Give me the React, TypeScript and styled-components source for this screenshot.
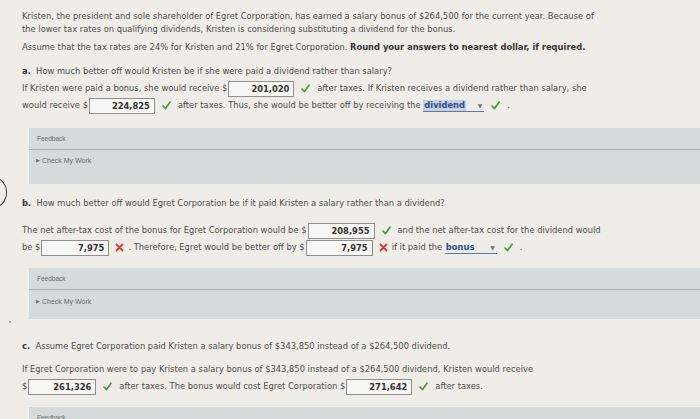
import React from "react";
import styled, { createGlobalStyle } from "styled-components";

const Global = createGlobalStyle`
  html, body { margin: 0; padding: 0; background: #eeede8; }
  body { font-family: "DejaVu Sans", Verdana, sans-serif; }
`;

const Page = styled.div`
  position: relative;
  width: 700px;
  height: 419px;
  overflow: hidden;
  box-sizing: border-box;
  padding: 10px 0 0 22px;
  color: #4f4f4c;
  font-size: 8.35px;
  background: #eeede8;
`;

const Para = styled.p<{ $mt: number }>`
  margin: ${(p) => p.$mt}px 0 0;
  line-height: 13px;
  white-space: nowrap;
`;

const Strong = styled.b`
  color: #363634;
`;

const Row = styled.div<{ $mt?: number }>`
  margin-top: ${(p) => p.$mt ?? 0}px;
  height: 17px;
  line-height: 17px;
  white-space: nowrap;
`;

const Box = styled.span<{ $w: number }>`
  display: inline-block;
  width: ${(p) => p.$w}px;
  height: 16px;
  box-sizing: border-box;
  margin-left: 1px;
  padding-right: 4px;
  border: 1px solid #8f8f8b;
  background: #f7f7f4;
  color: #333331;
  font-weight: bold;
  text-align: right;
  line-height: 14px;
  vertical-align: middle;
`;

const Mark = styled.svg<{ $ml: number; $mr: number }>`
  display: inline-block;
  width: 9px;
  height: 9px;
  margin: 0 ${(p) => p.$mr}px 0 ${(p) => p.$ml}px;
  vertical-align: middle;
`;

const Select = styled.span<{ $w: number }>`
  display: inline-flex;
  align-items: center;
  justify-content: space-between;
  width: ${(p) => p.$w}px;
  height: 11px;
  border-bottom: 1px solid #5a78ae;
  vertical-align: middle;
  line-height: 11px;
`;

const SelectText = styled.span<{ $hl?: boolean }>`
  color: #2f4e8c;
  font-weight: bold;
  background: ${(p) => (p.$hl ? "#c6d1e2" : "transparent")};
  padding: 0 1px;
`;

const Arrow = styled.span`
  color: #777;
  font-size: 6px;
  padding-right: 2px;
`;

const Panel = styled.div<{ $mt: number }>`
  margin: ${(p) => p.$mt}px 0 0 7px;
  background: #d4dbda;
  font-family: "Liberation Sans", Arial, sans-serif;
  color: #676b6a;
`;

const PanelHead = styled.div`
  height: 21px;
  border-bottom: 1px solid #a8b1b0;
  padding-left: 8px;
  display: flex;
  align-items: center;
  font-size: 6.5px;
`;

const PanelBody = styled.div<{ $h: number; $pt: number }>`
  height: ${(p) => p.$h}px;
  box-sizing: border-box;
  padding: ${(p) => p.$pt}px 0 0 7px;
  font-size: 7px;
  line-height: 12px;
`;

const Tri = styled.span`
  font-size: 5px;
  margin-right: 2px;
  vertical-align: 1px;
`;

const Arc = styled.div`
  position: absolute;
  left: -25px;
  top: 176px;
  width: 30px;
  height: 31px;
  border: 1.5px solid #3e3e3c;
  border-radius: 50%;
`;

const Dot = styled.div`
  position: absolute;
  left: 9px;
  top: 321px;
  width: 2px;
  height: 2px;
  border-radius: 50%;
  background: #888;
`;

const Check = () => (
  <Mark viewBox="0 0 9 9" $ml={7} $mr={7}>
    <path d="M1 5 L3.5 7.6 L8 1.2" fill="none" stroke="#4f9a3e" strokeWidth="1.7" strokeLinecap="round" strokeLinejoin="round" />
  </Mark>
);

const Cross = () => (
  <Mark viewBox="0 0 9 9" $ml={6} $mr={4}>
    <path d="M1.5 1.5 L7.5 7.5 M7.5 1.5 L1.5 7.5" fill="none" stroke="#d23a3a" strokeWidth="1.8" strokeLinecap="round" />
  </Mark>
);

const Feedback = ({ mt, h, pt }: { mt: number; h: number; pt: number }) => (
  <Panel $mt={mt}>
    <PanelHead>Feedback</PanelHead>
    <PanelBody $h={h} $pt={pt}>
      <Tri>▶</Tri>Check My Work
    </PanelBody>
  </Panel>
);

export default function App() {
  return (
    <>
      <Global />
      <Page>
        <Arc />
        <Dot />
        <Para $mt={0}>
          Kristen, the president and sole shareholder of Egret Corporation, has earned a salary bonus of $264,500 for the current year. Because of
          <br />
          the lower tax rates on qualifying dividends, Kristen is considering substituting a dividend for the bonus.
        </Para>
        <Para $mt={5}>
          Assume that the tax rates are 24% for Kristen and 21% for Egret Corporation. <Strong>Round your answers to nearest dollar, if required.</Strong>
        </Para>

        <Para $mt={11}>
          <Strong>a.</Strong>&nbsp; How much better off would Kristen be if she were paid a dividend rather than salary?
        </Para>
        <Row $mt={2}>
          If Kristen were paid a bonus, she would receive $<Box $w={66}>201,020</Box>
          <Check />
          after taxes. If Kristen receives a dividend rather than salary, she
        </Row>
        <Row>
          would receive $<Box $w={66}>224,825</Box>
          <Check />
          after taxes. Thus, she would be better off by receiving the{" "}
          <Select $w={61}>
            <SelectText $hl>dividend</SelectText>
            <Arrow>▼</Arrow>
          </Select>
          <Check />.
        </Row>

        <Feedback mt={14} h={34} pt={4} />

        <Para $mt={13}>
          <Strong>b.</Strong>&nbsp; How much better off would Egret Corporation be if it paid Kristen a salary rather than a dividend?
        </Para>
        <Row $mt={12}>
          The net after-tax cost of the bonus for Egret Corporation would be $<Box $w={67}>208,955</Box>
          <Check />
          and the net after-tax cost for the dividend would
        </Row>
        <Row>
          be $<Box $w={68}>7,975</Box>
          <Cross />. Therefore, Egret would be better off by $<Box $w={67}>7,975</Box>
          <Cross />
          if it paid the{" "}
          <Select $w={52}>
            <SelectText>bonus</SelectText>
            <Arrow>▼</Arrow>
          </Select>
          <Check />.
        </Row>

        <Feedback mt={12} h={29} pt={5} />

        <Para $mt={21}>
          <Strong>c.</Strong>&nbsp; Assume Egret Corporation paid Kristen a salary bonus of $343,850 instead of a $264,500 dividend.
        </Para>
        <Row $mt={8}>
          If Egret Corporation were to pay Kristen a salary bonus of $343,850 instead of a $264,500 dividend, Kristen would receive
        </Row>
        <Row>
          $<Box $w={68}>261,326</Box>
          <Check />
          after taxes. The bonus would cost Egret Corporation $<Box $w={66}>271,642</Box>
          <Check />
          after taxes.
        </Row>

        <Feedback mt={12} h={34} pt={4} />
      </Page>
    </>
  );
}
